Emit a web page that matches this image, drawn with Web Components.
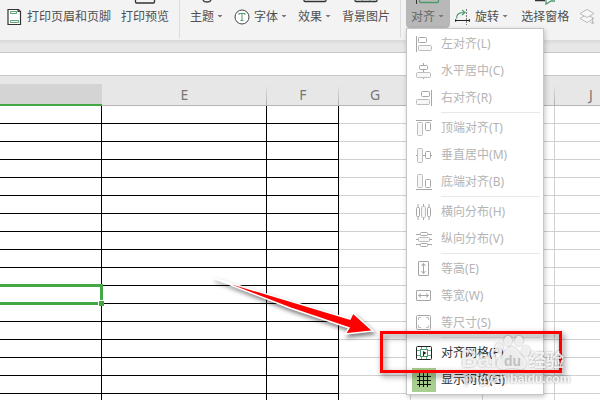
<!DOCTYPE html>
<html lang="zh-CN">
<head>
<meta charset="utf-8">
<title>页面布局</title>
<style>
html, body { margin: 0; height: 100%; overflow: hidden; background: #fff; }
body { font: 12px/18px "Noto Sans", "Noto Sans CJK SC", sans-serif; color: #505050; }
</style>
</head>
<body>
<sheet-app></sheet-app>
<script>
const ICONS = {
  page: '<path d="M1.500 .5h10l2 2v13h-12.500v-15z" fill="#fff" stroke="#333" stroke-width="1.200"/><path d="M10.500 .5v2.500h3" fill="#333"/><path d="M3.500 2.500h6v2h-6zM3.500 11.500h8v2h-8z" fill="none" stroke="#5fa27c"/>',
  font: '<circle cx="8" cy="8" r="7" fill="#fff" stroke="#444"/><path d="M5 6V4.500h6V6M8 4.500v7M6.500 11.500h3" fill="none" stroke="#4b9a6c"/>',
  rotate: '<path d="M1.500 9.500C1.500 5 4 3.500 9 3.500M7 1l3 2.500L7 6" fill="none" stroke="#4b9a6c" stroke-width="1.200"/><path d="M11.500 0v16" stroke="#777" stroke-dasharray="2 1"/><path d="M0 11.500h15" stroke="#222"/><path d="M0 10l2.500 1.500L0 13zM15 10l-2.500 1.500L15 13z" fill="#222"/>',
  layers: '<path d="M1 9.500l7 4 7-4-7-4z" fill="#f8f8f8" stroke="#bbb"/><path d="M1 4.500l7 4 7-4-7-4z" fill="#f8f8f8" stroke="#bbb"/><path d="M13.500 9v6M11.500 13l2 2 2-2" fill="none" stroke="#bbb"/>',
  left: '<path d="M.5 0v16"/><rect x="2.500" y="1.500" width="8" height="5" rx="1"/><rect x="2.500" y="9.500" width="13" height="5" rx="1" class="soft"/>',
  center: '<path d="M7.500 0v16"/><rect x="3.500" y="2.500" width="8" height="4" rx="1" fill="#fff"/><rect x=".5" y="9.500" width="14" height="5" rx="1" class="soft"/>',
  right: '<path d="M15.500 0v16"/><rect x="5.500" y="1.500" width="8" height="5" rx="1"/><rect x=".5" y="9.500" width="13" height="5" rx="1" class="soft"/>',
  top: '<path d="M0 .5h16"/><rect x="1.500" y="2.500" width="5" height="13" rx="1" class="soft"/><rect x="9.500" y="2.500" width="5" height="8" rx="1"/>',
  middle: '<path d="M0 8.500h1M7 8.500h3M14 8.500h2"/><rect x="1.500" y="1.500" width="5" height="14" rx="1" class="soft"/><rect x="9.500" y="4.500" width="5" height="7" rx="1"/>',
  bottom: '<path d="M0 15.500h16"/><rect x="1.500" y=".5" width="5" height="13" rx="1" class="soft"/><rect x="9.500" y="5.500" width="5" height="8" rx="1"/>',
  hdist: '<path d="M2 0v16M7.500 0v16M13 0v16"/><rect x=".5" y="3.500" width="3" height="9" rx="1" fill="#fff"/><rect x="5.500" y="2.500" width="4" height="11" rx="1" class="soft"/><rect x="11.500" y="3.500" width="3" height="9" rx="1" fill="#fff"/>',
  vdist: '<path d="M0 3.500h16M0 8.500h16M0 13.500h16"/><rect x="4.500" y="1.500" width="7" height="3" rx="1" fill="#fff"/><rect x="2.500" y="6.500" width="11" height="4" rx="1" class="soft"/><rect x="4.500" y="12.500" width="7" height="3" rx="1" fill="#fff"/>',
  height: '<rect x="2.500" y=".5" width="10" height="14" rx=".5"/><path d="M7.500 2.500v10M5.500 5l2-2.500L9.500 5M5.500 10l2 2.500 2-2.500"/>',
  width: '<rect x=".5" y="2.500" width="14" height="10" rx=".5"/><path d="M2.500 7.500h10M5 5.500l-2.500 2L5 9.500M10 5.500l2.500 2-2.500 2"/>',
  size: '<rect x=".5" y=".5" width="14" height="14" rx="1"/><path d="M2.500 5V2.500H5M10 2.500h2.500V5M12.500 10v2.500H10M5 12.500H2.500V10" stroke="#c0c0c0"/>',
  snap: '<path d="M5.500 2v2M10.500 2v2M5.500 12v2M10.500 12v2M1 5.500h3M1 10.500h3M12 5.500h3M12 10.500h3" stroke="#6aa987"/><rect x="4.500" y="4.500" width="7" height="7" stroke="#4b9a6c"/><rect x=".5" y="1.500" width="15" height="13" rx="1" stroke="#222"/><path d="M7 6v5h1V9.500l2.500-1.500L7 6z" fill="#222" stroke="none"/>',
  grid: '<path d="M1 4.500h14M1 8.500h14M1 12.500h14M3.500 1v14M7.500 1v14M11.500 1v14" stroke="#111"/>',
  preview: '<path d="M-.5-4v6a1 1 0 0 0 1 1h17a1 1 0 0 0 1-1v-6" fill="none" stroke="#333" stroke-width="1.300"/>',
  theme: '<path d="M5-1c0 4 8 4 8 0" fill="none" stroke="#444" stroke-width="1.300"/>',
  effect: '<path d="M-2-4v4.500a1 1 0 0 0 1 1h20a1 1 0 0 0 1-1V-4" fill="none" stroke="#333" stroke-width="1.300"/>',
  picture: '<path d="M-2-4v4.500a1 1 0 0 0 1 1h20a1 1 0 0 0 1-1V-4" fill="none" stroke="#333" stroke-width="1.300"/><path d="M4 1.500l3-3M14 1.500l-3-3" stroke="#4b9a6c"/>',
  align: '<path d="M-2.500 0v4" stroke="#333"/><path d="M.5-4v5.500a1 1 0 0 0 1 1h17a1 1 0 0 0 1-1V-4" fill="none" stroke="#4b9a6c" stroke-width="1.300"/>',
  pane: '<path d="M-1 .5h10" stroke="#333" stroke-width="1.500"/><path d="M10-1v5l5-3h4" fill="#fff" stroke="#4b9a6c" stroke-width="1.300"/>'
};

const define = (name, html, setup) => {
  const template = document.createElement('template');
  template.innerHTML = html;
  customElements.define(name, class extends HTMLElement {
    constructor() {
      super();
      this.attachShadow({ mode: 'open' }).append(template.content.cloneNode(true));
    }
    connectedCallback() { if (setup) setup(this, this.shadowRoot); }
  });
};

define('ribbon-button', `
<style>
:host { display: block; flex: none; }
button { all: unset; box-sizing: border-box; display: grid; grid-template-rows: 8px 18px; justify-items: start; white-space: nowrap; cursor: default; }
:host([side]) button { padding-left: 7px; }
:host([active]) { margin: 0 -5px; }
:host([active]) button { padding: 0 5px 2px; background: #b8b8b8; border-radius: 0 0 4px 4px; color: #666; }
.head { justify-self: center; }
.top { display: block; width: 18px; height: 4px; overflow: visible; }
.row { display: flex; align-items: center; }
.side { width: 17px; height: 16px; margin-right: 3px; overflow: visible; }
.bare { margin-right: 0; }
.caret { width: 6px; height: 3px; margin: 0 1px 2px 3px; background: #777; clip-path: polygon(0 0, 100% 0, 50% 100%); }
</style>
<button type="button"><span class="head"></span><span class="row"><slot></slot></span></button>`, (host, root) => {
  const top = host.getAttribute('top'), icon = host.getAttribute('icon');
  const row = root.querySelector('.row');
  if (top) root.querySelector('.head').innerHTML = `<svg class="top" viewBox="0 0 18 4">${ICONS[top]}</svg>`;
  if (icon) row.insertAdjacentHTML('afterbegin', `<svg class="side ${host.hasAttribute('label') ? 'bare' : ''}" viewBox="0 0 17 16">${ICONS[icon]}</svg>`);
  if (host.hasAttribute('menu')) row.insertAdjacentHTML('beforeend', '<i class="caret"></i>');
  if (host.hasAttribute('label')) root.querySelector('button').setAttribute('aria-label', host.getAttribute('label'));
});

define('menu-item', `
<style>
:host { display: block; }
button { all: unset; box-sizing: border-box; width: 100%; height: 27px; display: flex; align-items: center; gap: 5px; padding-left: 5px; color: #333; white-space: nowrap; cursor: default; }
button:disabled { color: #b4b4b4; }
.icon { width: 24px; height: 24px; display: grid; place-items: center; }
:host([checked]) .icon { background: #a9cf90; }
svg { width: 16px; height: 16px; fill: none; stroke: #a6a6a6; }
.soft { fill: #f7f7f7; stroke: #bdbdbd; }
</style>
<button type="button"><span class="icon"></span><slot></slot></button>`, (host, root) => {
  root.querySelector('.icon').innerHTML = `<svg viewBox="0 0 16 16">${ICONS[host.getAttribute('icon')]}</svg>`;
  root.querySelector('button').disabled = !host.hasAttribute('enabled');
});

define('align-menu', `
<style>
:host { display: block; box-sizing: border-box; width: 138px; padding: 1px 0; background: #fff; border: 1px solid #c6c6c6; box-shadow: 1px 2px 5px rgba(0,0,0,.22); }
hr { height: 1px; margin: 1px 3px 1px 34px; border: 0; background: #e8e8e8; }
</style>
<menu-item icon="left">左对齐(L)</menu-item>
<menu-item icon="center">水平居中(C)</menu-item>
<menu-item icon="right">右对齐(R)</menu-item>
<hr>
<menu-item icon="top">顶端对齐(T)</menu-item>
<menu-item icon="middle">垂直居中(M)</menu-item>
<menu-item icon="bottom">底端对齐(B)</menu-item>
<hr>
<menu-item icon="hdist">横向分布(H)</menu-item>
<menu-item icon="vdist">纵向分布(V)</menu-item>
<hr>
<menu-item icon="height">等高(E)</menu-item>
<menu-item icon="width">等宽(W)</menu-item>
<menu-item icon="size">等尺寸(S)</menu-item>
<hr>
<menu-item icon="snap" enabled>对齐网格(P)</menu-item>
<menu-item icon="grid" enabled checked>显示网格(G)</menu-item>`);

define('ribbon-bar', `
<style>
:host { display: flex; gap: 10px; height: 40px; background: #f3f3f3; }
.rule { flex: none; width: 1px; height: 38px; background: #dcdcdc; }
.anchor { position: relative; flex: none; }
align-menu { position: absolute; z-index: 2; top: 28px; left: -5px; }
.pane { display: flex; gap: 10px; padding-left: 2px; }
</style>
<ribbon-button side icon="page">打印页眉和页脚</ribbon-button>
<ribbon-button top="preview">打印预览</ribbon-button>
<span class="rule"></span>
<ribbon-button top="theme" menu>主题</ribbon-button>
<ribbon-button icon="font" menu>字体</ribbon-button>
<ribbon-button top="effect" menu>效果</ribbon-button>
<ribbon-button top="picture">背景图片</ribbon-button>
<span class="rule"></span>
<div class="anchor"><ribbon-button active top="align" menu>对齐</ribbon-button><align-menu></align-menu></div>
<ribbon-button icon="rotate" menu>旋转</ribbon-button>
<div class="pane"><ribbon-button top="pane">选择窗格</ribbon-button>
<ribbon-button icon="layers" label="图层"></ribbon-button></div>`);

define('formula-bar', `
<style>
:host { display: block; padding-top: 12px; background: linear-gradient(#d9d9d9, #e7e7e7 5px); }
input { display: block; box-sizing: border-box; width: 100%; height: 24px; border: solid #c8c8c8; border-width: 1px 0; border-radius: 0; background: #fff; outline: 0; }
</style>
<input type="text" aria-label="编辑栏">`);

define('sheet-grid', `
<style>
:host { display: block; overflow: hidden; }
table { width: 100%; table-layout: fixed; border-collapse: separate; border-spacing: 0; }
col { width: 72px; } col.d { width: 102px; } col.e { width: 165px; }
th { box-sizing: border-box; height: 30px; padding: 8px 0 0; border-bottom: 1px solid #b5b5b5; font-weight: 400; font-size: 14px; line-height: 20px; color: #777;
  background: linear-gradient(transparent 8px, #b0b0b0) right / 1px 100% no-repeat, #e7e7e7; }
th.on { border-bottom: 2px solid #43a843; background: linear-gradient(#e7e7e7 8px, #d4d4d4 8px); }
td { box-sizing: border-box; height: 18px; padding: 0; border: solid #d0d0d0; border-width: 0 1px 1px 0; }
td.ink { border-color: #000; }
td.cell { position: relative; }
.cell::before { content: ""; position: absolute; inset: -2px -2px -2px 0; border: solid #43a843; border-width: 3px 3px 3px 0; }
.cell::after { content: ""; position: absolute; right: -3px; bottom: -3px; width: 5px; height: 5px; background: #43a843; border: solid #fff; border-width: 1px 0 0 1px; }
</style>
<table>
<colgroup><col class="d"><col class="e"><col><col><col><col><col></colgroup>
<thead><tr><th class="on" aria-label="D"></th><th>E</th><th>F</th><th>G</th><th aria-label="H"></th><th aria-label="I"></th><th>J</th></tr></thead>
<tbody></tbody>
</table>`, (host, root) => {
  const body = root.querySelector('tbody');
  for (let r = 0; r < 18; r++) {
    const row = body.insertRow();
    for (let c = 0; c < 7; c++) {
      const cell = row.insertCell();
      if (c < 3) cell.className = 'ink';
      if (r === 10 && c === 0) cell.className = 'ink cell';
    }
  }
});

define('guide-arrow', `
<style>
:host { display: block; width: 180px; height: 70px; }
svg { display: block; width: 100%; height: 100%; overflow: visible; filter: drop-shadow(2px 3px 2px rgba(0,0,0,.5)); }
</style>
<svg viewBox="0 0 180 70"><path d="M13 7 150 48 153 42 173 60 145 63 149 57 90 37Z" fill="#f00" stroke="#fff" stroke-width="1.500"/></svg>`);

define('guide-frame', `
<style>
:host { display: block; box-sizing: border-box; width: 182px; height: 42px; border: 3px solid #f00; filter: drop-shadow(2px 3px 3px rgba(0,0,0,.55)); }
</style>`);

define('baidu-mark', `
<style>
:host { display: block; width: 112px; height: 56px; }
svg { display: block; overflow: visible; width: 100%; height: 100%; filter: drop-shadow(0 0 1px rgba(0,0,0,.45)); }
text { font-family: "Liberation Sans", "Noto Sans CJK SC", sans-serif; font-weight: 700; fill: #fff; fill-opacity: .8; }
.du { fill: #bbb; fill-opacity: .9; }
</style>
<svg viewBox="0 0 112 56">
<text x="0" y="34" font-size="23">Bai</text>
<g fill="#fff" fill-opacity=".8"><ellipse cx="38" cy="15" rx="4" ry="5"/><ellipse cx="47" cy="8" rx="4" ry="5"/><ellipse cx="58" cy="8" rx="4" ry="5"/><ellipse cx="65" cy="18" rx="4" ry="5"/><path d="M51 14c5 0 7 7 11 10 6 5 3 13-3 12-6-1-10-1-16 0-7 1-10-7-4-12 4-3 6-10 12-10z"/></g>
<text class="du" x="43" y="33" font-size="14">du</text>
<text x="67" y="34" font-size="18">经验</text>
<text x="4" y="50" font-size="12">jingyan.baidu.com</text>
</svg>`);

define('sheet-app', `
<style>
:host { display: block; position: relative; height: 100vh; overflow: hidden; }
guide-arrow, guide-frame, baidu-mark { position: absolute; z-index: 3; pointer-events: none; }
guide-arrow { left: 200px; top: 271px; }
guide-frame { left: 380px; top: 331px; }
baidu-mark { left: 461px; top: 333px; }
</style>
<ribbon-bar></ribbon-bar>
<formula-bar></formula-bar>
<sheet-grid></sheet-grid>
<guide-arrow></guide-arrow>
<guide-frame></guide-frame>
<baidu-mark></baidu-mark>`);
</script>
</body>
</html>
